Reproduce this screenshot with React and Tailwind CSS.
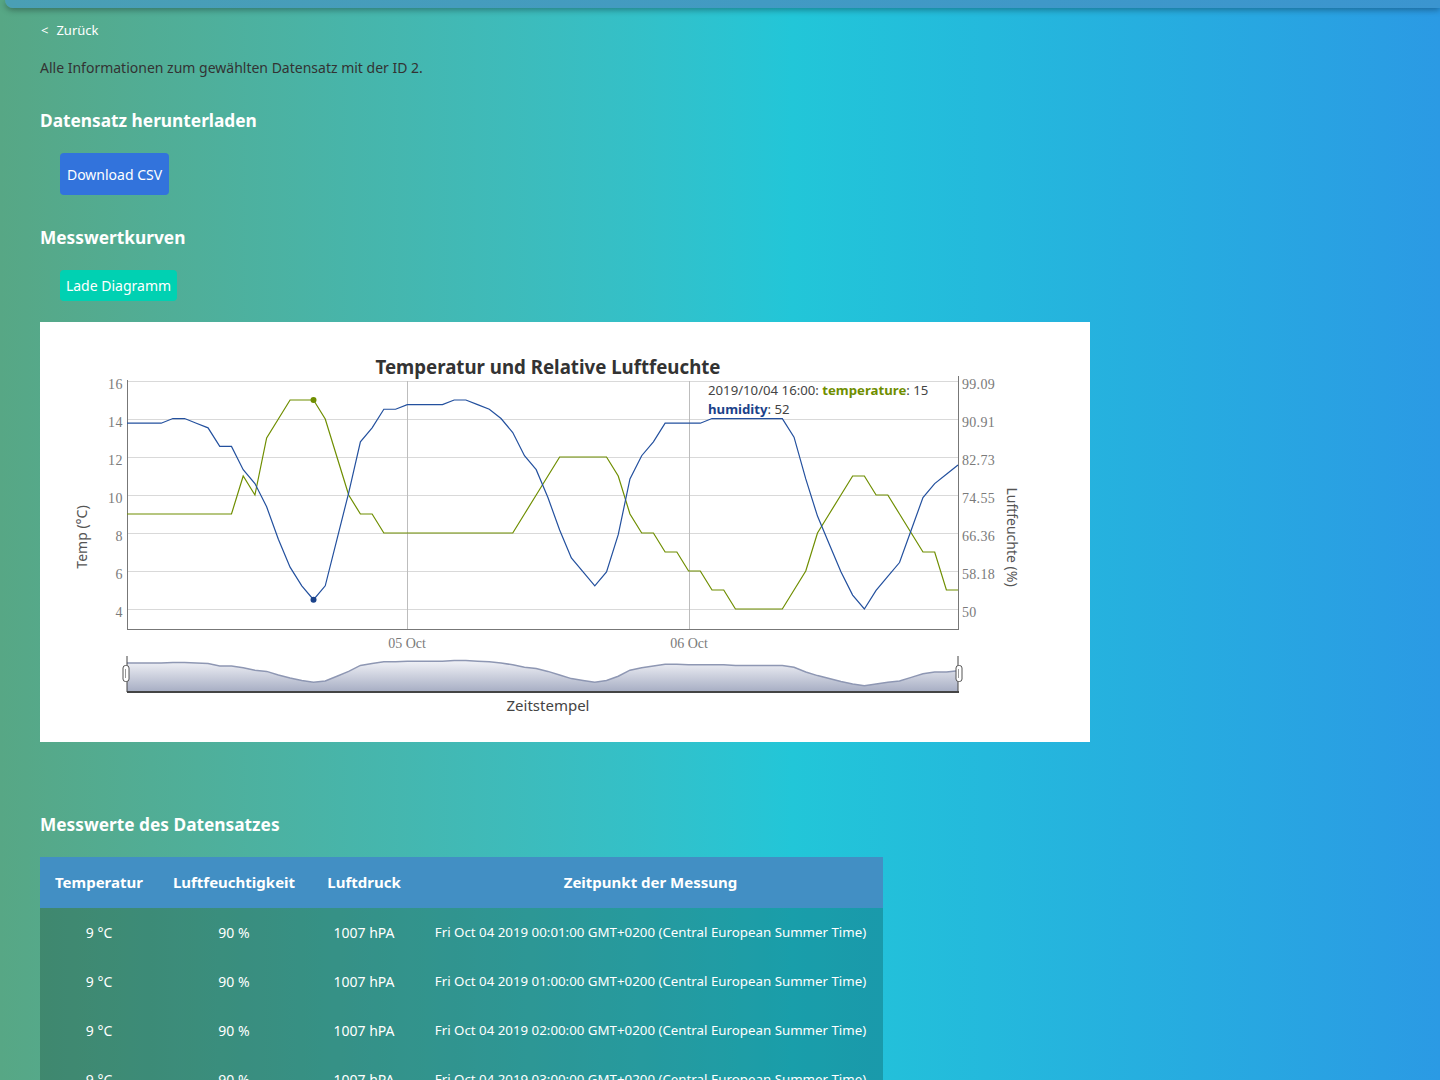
import React from "react";

const temp = [
  9, 9, 9, 9, 9, 9, 9, 9, 9, 9, 11, 10, 13, 14, 15, 15, 15, 14, 12, 10, 9, 9,
  8, 8, 8, 8, 8, 8, 8, 8, 8, 8, 8, 8, 9, 10, 11, 12, 12, 12, 12, 12, 11, 9, 8,
  8, 7, 7, 6, 6, 5, 5, 4, 4, 4, 4, 4, 5, 6, 8, 9, 10, 11, 11, 10, 10, 9, 8, 7,
  7, 5, 5,
];
const humidity = [
  90, 90, 90, 90, 91, 91, 90, 89, 85, 85, 80, 77, 72, 65, 59, 55, 52, 55, 65,
  75, 86, 89, 93, 93, 94, 94, 94, 94, 95, 95, 94, 93, 91, 88, 83, 80, 74, 67,
  61, 58, 55, 58, 66, 78, 83, 86, 90, 90, 90, 90, 91, 91, 91, 91, 91, 91, 91,
  87, 78, 70, 64, 58, 53, 50, 54, 57, 60, 67, 74, 77, 79, 81,
];

// page coords, the svg is shifted by the box offset
const px = (t) => 126 + t * 11.72;
const pyT = (v) => 609 - (v - 4) * 19;
const pyH = (h) => 609 - (h - 50) * 4.645;
const pyMini = (i) => 663 - ((temp[i] + humidity[i]) / 2 - 49.5) * 1.2;

const clampX = (x) => Math.min(958, Math.max(127, x));

const tempPts = temp.map((v, i) => `${clampX(px(i))},${pyT(v)}`).join(" ");
const humPts = humidity.map((v, i) => `${clampX(px(i))},${pyH(v)}`).join(" ");
const miniLine = temp.map((_, i) => `${clampX(px(i))},${pyMini(i)}`).join(" ");
const miniArea = `127,692 ${miniLine} 958,692`;

const gridY = [381, 419, 457, 495, 533, 571, 609];
const leftLabels = ["16", "14", "12", "10", "8", "6", "4"];
const rightLabels = ["99.09", "90.91", "82.73", "74.55", "66.36", "58.18", "50"];

const rows = [
  "Fri Oct 04 2019 00:01:00 GMT+0200 (Central European Summer Time)",
  "Fri Oct 04 2019 01:00:00 GMT+0200 (Central European Summer Time)",
  "Fri Oct 04 2019 02:00:00 GMT+0200 (Central European Summer Time)",
  "Fri Oct 04 2019 03:00:00 GMT+0200 (Central European Summer Time)",
];

function Chart() {
  const sans = "Noto Sans, Open Sans, sans-serif";
  const serif = "Liberation Serif, serif";
  return (
    <svg width="1050" height="420" viewBox="40 322 1050 420" className="block">
      <defs>
        <linearGradient id="mini" x1="0" y1="0" x2="0" y2="1">
          <stop offset="0%" stopColor="#f1f2f7" />
          <stop offset="100%" stopColor="#a6adc3" />
        </linearGradient>
      </defs>
      <rect x="40" y="322" width="1050" height="420" fill="#fff" />

      <text x="548" y="374" textAnchor="middle" fontFamily={sans} fontWeight="700" fontSize="19" fill="#333" textLength="345" lengthAdjust="spacingAndGlyphs">
        Temperatur und Relative Luftfeuchte
      </text>

      {/* grid */}
      {gridY.map((y) => (
        <line key={y} x1="127" x2="958" y1={y + 0.5} y2={y + 0.5} stroke="#d9d9d9" />
      ))}
      <line x1="407.5" x2="407.5" y1="381" y2="629" stroke="#bdbdbd" />
      <line x1="689.5" x2="689.5" y1="381" y2="629" stroke="#bdbdbd" />

      {/* axes */}
      <line x1="127.5" x2="127.5" y1="380" y2="629" stroke="#777" />
      <line x1="958.5" x2="958.5" y1="376" y2="629" stroke="#777" />
      <line x1="127" x2="959" y1="629.5" y2="629.5" stroke="#777" />

      {gridY.map((y, i) => (
        <text key={"l" + y} x="123" y={y + 8} textAnchor="end" fontFamily={serif} fontSize="14" fill="#7a7a7a" letterSpacing="0.5">
          {leftLabels[i]}
        </text>
      ))}
      {gridY.map((y, i) => (
        <text key={"r" + y} x="962" y={y + 8} fontFamily={serif} fontSize="14" fill="#7a7a7a" letterSpacing="0.3">
          {rightLabels[i]}
        </text>
      ))}
      <text x="407" y="648" textAnchor="middle" fontFamily={serif} fontSize="14" fill="#7a7a7a">05 Oct</text>
      <text x="689" y="648" textAnchor="middle" fontFamily={serif} fontSize="14" fill="#7a7a7a">06 Oct</text>

      <text transform="translate(87 537) rotate(-90)" textAnchor="middle" fontFamily={sans} fontSize="14" fill="#555">
        Temp (°C)
      </text>
      <text transform="translate(1007 537) rotate(90)" textAnchor="middle" fontFamily={sans} fontSize="14" fill="#555">
        Luftfeuchte (%)
      </text>

      {/* series */}
      <polyline points={tempPts} fill="none" stroke="#6f8e00" strokeWidth="1.2" />
      <polyline points={humPts} fill="none" stroke="#23509e" strokeWidth="1.2" />
      <circle cx={px(16)} cy={pyT(15)} r="3" fill="#6f8e00" />
      <circle cx={px(16)} cy={pyH(52)} r="3" fill="#1b428a" />

      {/* legend */}
      <rect x="704" y="382" width="226" height="36" fill="#fff" />
      <text x="708" y="395" fontFamily={sans} fontSize="13.2" fill="#444">
        2019/10/04 16:00: <tspan fill="#6f8e00" fontWeight="700">temperature</tspan>: 15
      </text>
      <text x="708" y="414" fontFamily={sans} fontSize="13.2" fill="#444">
        <tspan fill="#1b428a" fontWeight="700">humidity</tspan>: 52
      </text>

      {/* range selector */}
      <polygon points={miniArea} fill="url(#mini)" />
      <polyline points={miniLine} fill="none" stroke="#8e97b3" strokeWidth="1.5" />
      <line x1="127" x2="959" y1="692" y2="692" stroke="#444" strokeWidth="2" />
      <line x1="127" x2="127" y1="656" y2="692" stroke="#444" />
      <line x1="958" x2="958" y1="656" y2="692" stroke="#444" />
      <rect x="123" y="665.5" width="6" height="16" rx="2.5" fill="#fff" stroke="#555" />
      <rect x="956" y="665.5" width="6" height="16" rx="2.5" fill="#fff" stroke="#555" />
      <line x1="125.5" x2="125.5" y1="669" y2="678" stroke="#999" />
      <line x1="958.5" x2="958.5" y1="669" y2="678" stroke="#999" />

      <text x="548" y="711" textAnchor="middle" fontFamily={sans} fontSize="15" fill="#444">
        Zeitstempel
      </text>
    </svg>
  );
}

export default function App() {
  return (
    <div className="min-h-screen bg-linear-to-r from-[#57a785] via-[#22c6d8] via-55% to-[#2b9ae4] font-['Noto_Sans','Open_Sans',sans-serif] text-white">
      <div className="h-2 ml-[5px] rounded-bl-2xl bg-linear-to-r from-[#4a9fb4] to-[#3b95d0] shadow-[0_2px_6px_rgba(0,0,0,0.35)]" />

      <div className="px-10">
        <div className="mt-[14px] h-4 leading-4 text-[13px] flex">
          <span className="ml-px">&lt;</span>
          <span className="ml-2">Zurück</span>
        </div>

        <p className="mt-5 h-5 leading-5 text-[14px] text-[#333]">
          Alle Informationen zum gewählten Datensatz mit der ID 2.
        </p>

        <h2 className="mt-[29px] h-7 leading-7 text-[17.3px] font-bold">Datensatz herunterladen</h2>
        <button className="mt-[18px] ml-5 h-[42px] w-[109px] rounded-[4px] bg-[#3273dc] text-[14px] text-white block">
          Download CSV
        </button>

        <h2 className="mt-[29px] h-7 leading-7 text-[17.3px] font-bold">Messwertkurven</h2>
        <button className="mt-[18px] ml-5 h-[31px] w-[117px] rounded-[4px] bg-[#00d1b2] text-[14px] text-white block">
          Lade Diagramm
        </button>

        <div className="mt-[21px] w-[1050px] h-[420px] bg-white">
          <Chart />
        </div>

        <h2 className="mt-[69px] h-7 leading-7 text-[17.3px] font-bold">Messwerte des Datensatzes</h2>

        <table className="mt-[18px] w-[843px] table-fixed border-collapse">
          <colgroup>
            <col className="w-[118px]" />
            <col className="w-[152px]" />
            <col className="w-[108px]" />
            <col className="w-[465px]" />
          </colgroup>
          <thead>
            <tr className="h-[51px] bg-[#428fc4] text-[15px] font-bold">
              <th>Temperatur</th>
              <th>Luftfeuchtigkeit</th>
              <th>Luftdruck</th>
              <th>Zeitpunkt der Messung</th>
            </tr>
          </thead>
          <tbody className="bg-[rgba(0,40,30,0.25)] text-[14px]">
            {rows.map((r) => (
              <tr key={r} className="h-[49px] text-center">
                <td>9 °C</td>
                <td>90 %</td>
                <td>1007 hPA</td>
                <td className="whitespace-nowrap text-[13.3px]">{r}</td>
              </tr>
            ))}
          </tbody>
        </table>
      </div>
    </div>
  );
}
